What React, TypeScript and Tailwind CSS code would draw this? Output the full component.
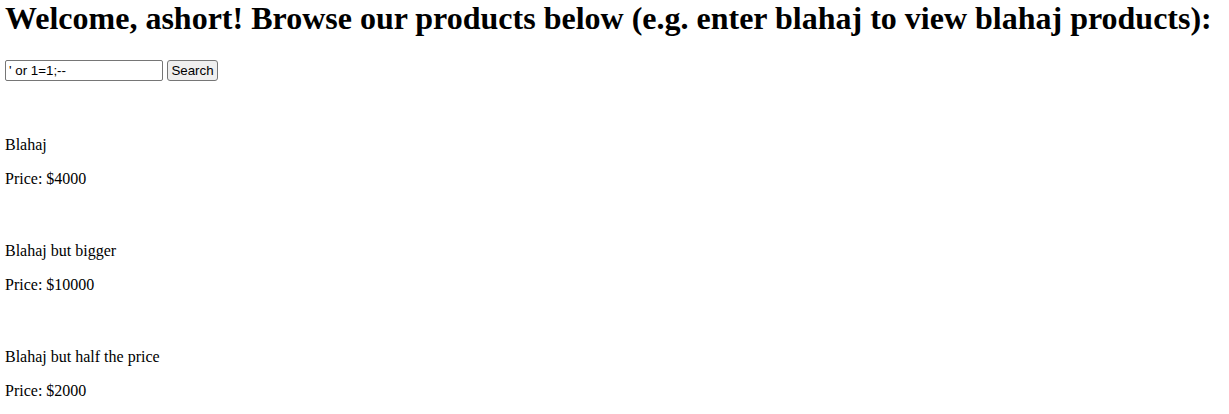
import React from 'react';

const products = [
  { name: 'Blahaj', price: 4000 },
  { name: 'Blahaj but bigger', price: 10000 },
  { name: 'Blahaj but half the price', price: 2000 },
];

const App: React.FC = () => {
  return (
    <div className="min-h-screen bg-white pl-[5px] text-black font-['Liberation_Serif','Times_New_Roman',serif]">
      <h1 className="text-[32px] font-bold leading-[37px] whitespace-nowrap">
        Welcome, ashort! Browse our products below (e.g. enter blahaj to view blahaj products):
      </h1>

      <form className="mt-[23px] flex items-center gap-[4px]" onSubmit={(e) => e.preventDefault()}>
        <input
          type="text"
          defaultValue="' or 1=1;--"
          className="h-[21px] w-[158px] rounded-[2px] border border-[#767676] bg-white px-[3px] text-[13.33px] font-['Liberation_Sans',Arial,sans-serif] text-black outline-none"
        />
        <button
          type="submit"
          className="h-[21px] w-[51px] rounded-[3px] border border-[#767676] bg-[#efefef] text-[13.33px] font-['Liberation_Sans',Arial,sans-serif] text-black"
        >
          Search
        </button>
      </form>

      <div className="flex flex-col">
        {products.map((p) => (
          <div key={p.name} className="pt-[54px] first:pt-[55px] text-[16px] leading-[18px]">
            <p>{p.name}</p>
            <p className="mt-[16px]">Price: ${p.price}</p>
          </div>
        ))}
      </div>
    </div>
  );
};

export default App;
